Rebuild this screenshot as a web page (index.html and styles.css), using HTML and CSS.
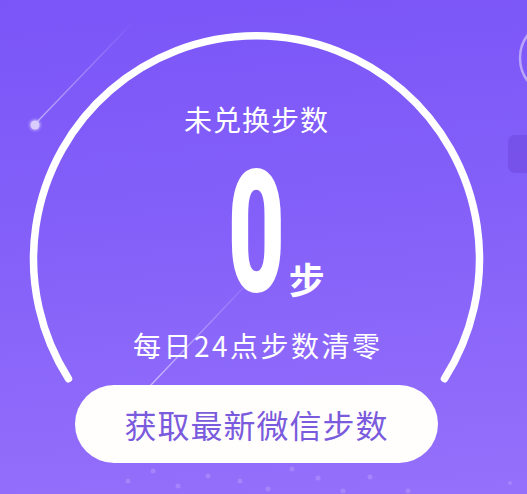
FILE: index.html
```html
<!DOCTYPE html>
<html lang="zh-CN">
<head>
<meta charset="utf-8">
<title>未兑换步数</title>
<link rel="stylesheet" href="styles.css">
</head>
<body>
<div class="page">
  <svg class="deco" width="527" height="494" viewBox="0 0 527 494" aria-hidden="true">
    <defs>
      <linearGradient id="m1" x1="135" y1="20" x2="36" y2="123" gradientUnits="userSpaceOnUse">
        <stop offset="0" stop-color="#fff" stop-opacity="0"/>
        <stop offset="1" stop-color="#fff" stop-opacity="0.5"/>
      </linearGradient>
      <linearGradient id="m2" x1="243" y1="288" x2="150" y2="386" gradientUnits="userSpaceOnUse">
        <stop offset="0" stop-color="#fff" stop-opacity="0.1"/>
        <stop offset="1" stop-color="#fff" stop-opacity="0.55"/>
      </linearGradient>
      <filter id="glow" x="-1" y="-1" width="3" height="3">
        <feGaussianBlur stdDeviation="1.2"/>
      </filter>
    </defs>
    <line x1="135" y1="20" x2="37" y2="122" stroke="url(#m1)" stroke-width="1.3"/>
    <circle cx="35" cy="125" r="6" fill="#fff" opacity="0.35" filter="url(#glow)"/>
    <circle cx="35" cy="125" r="4.5" fill="#d9ccff"/>
    <line x1="243" y1="288" x2="150" y2="386" stroke="url(#m2)" stroke-width="1.3"/>
    <circle cx="558" cy="58" r="38" fill="none" stroke="#fff" stroke-opacity="0.45" stroke-width="2.5"/>
    <rect x="508" y="135" width="40" height="38" rx="7" fill="#5a34c4" fill-opacity="0.28"/>
    <path d="M68.5 378.7 A223 223 0 1 1 444.5 378.7" fill="none" stroke="#fff" stroke-width="7.5" stroke-linecap="round"/>
    <g fill="#fff" fill-opacity="0.16">
      <circle cx="153" cy="471" r="2.5"/>
      <circle cx="128" cy="481" r="2.5"/>
      <circle cx="208" cy="476" r="2.5"/>
      <circle cx="178" cy="486" r="2.5"/>
      <circle cx="240" cy="481" r="2.5"/>
      <circle cx="268" cy="489" r="2.5"/>
      <circle cx="292" cy="469" r="2.5"/>
      <circle cx="318" cy="478" r="2.5"/>
      <circle cx="343" cy="491" r="2.5"/>
      <circle cx="370" cy="477" r="2.5"/>
      <circle cx="408" cy="491" r="2.5"/>
      <circle cx="510" cy="483" r="2"/>
    </g>
  </svg>

  <main class="content">
    <div class="title">未兑换步数</div>
    <div class="numrow">
      <span></span>
      <span class="num">0</span>
      <span class="unit">步</span>
    </div>
    <div class="note">每日24点步数清零</div>
    <button class="btn" type="button">获取最新微信步数</button>
  </main>
</div>
</body>
</html>
```

FILE: styles.css
```css
* { box-sizing: border-box; }

html, body {
  margin: 0;
  padding: 0;
}

body {
  font-family: "Noto Sans CJK SC", "Noto Sans", sans-serif;
  background: #8a63f9;
}

.page {
  position: relative;
  width: 527px;
  height: 494px;
  overflow: hidden;
  background: linear-gradient(175deg, #7b55f8 0%, #8460f9 45%, #9570fb 100%);
}

.deco {
  position: absolute;
  left: 0;
  top: 0;
}

.content {
  position: relative;
  z-index: 1;
  width: 513px;
  display: flex;
  flex-direction: column;
  align-items: center;
  padding-top: 105px;
  color: #fff;
}

.title {
  font-size: 28px;
  line-height: 28px;
  letter-spacing: 1px;
}

.numrow {
  width: 100%;
  display: grid;
  grid-template-columns: 1fr auto 1fr;
  align-items: end;
  margin-top: 38px;
  height: 122px;
}

.num {
  font-family: Roboto, "Liberation Sans", sans-serif;
  font-weight: 900;
  font-size: 170px;
  line-height: 120px;
  transform: scaleX(0.58);
  margin: 0 -20px;
  height: 120px;
}

.unit {
  font-size: 36px;
  font-weight: 700;
  line-height: 36px;
  padding-left: 3px;
  margin-bottom: -3px;
}

.note {
  margin-top: 38px;
  font-size: 28px;
  line-height: 28px;
  letter-spacing: 2.5px;
  margin-right: -2.5px;
}

.btn {
  margin-top: 26px;
  width: 363px;
  height: 78px;
  border: 0;
  border-radius: 39px;
  background: #fffefc;
  color: #7a5add;
  font-family: "Noto Sans CJK SC", "Noto Sans", sans-serif;
  font-size: 32px;
  letter-spacing: 1px;
  padding: 0;
  cursor: pointer;
}
```
